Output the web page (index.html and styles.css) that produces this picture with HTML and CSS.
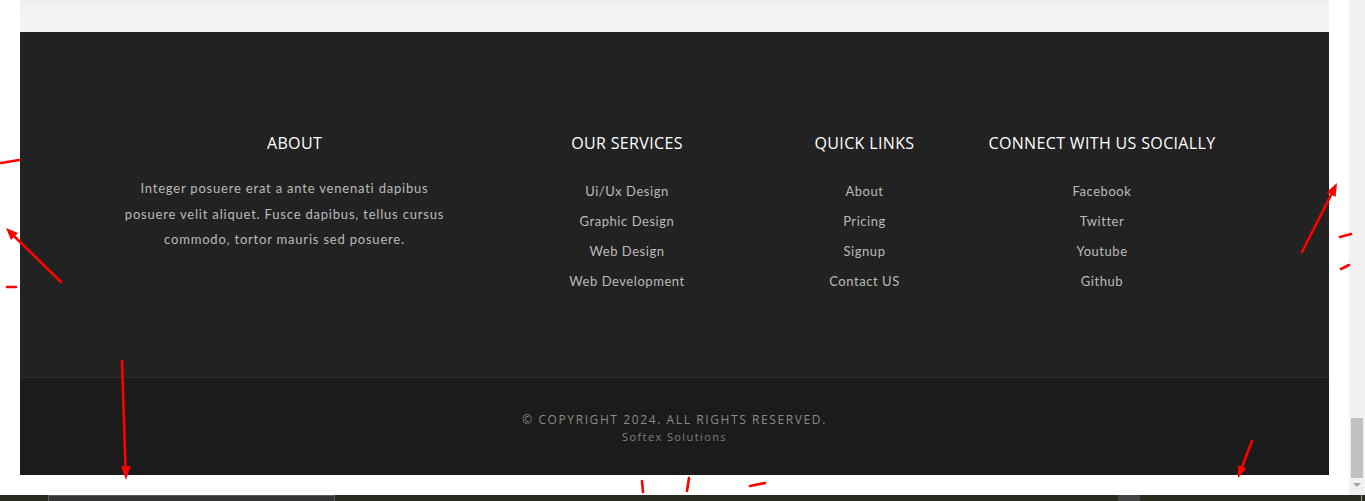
FILE: index.html
```html
<!DOCTYPE html>
<html lang="en">
<head>
<meta charset="utf-8">
<title>Footer</title>
<link rel="stylesheet" href="styles.css">
</head>
<body>
<div class="screen">
  <div class="viewport">
    <div class="site">
      <div class="topband"></div>
      <footer class="footer">
        <div class="footer-main">
          <div class="container">
            <div class="col col-4">
              <h4 class="col-title">ABOUT</h4>
              <p class="about-text">Integer posuere erat a ante venenati dapibus posuere velit aliquet. Fusce dapibus, tellus cursus commodo, tortor mauris sed posuere.</p>
            </div>
            <div class="col col-3">
              <h4 class="col-title">OUR SERVICES</h4>
              <ul class="links">
                <li><a href="#">Ui/Ux Design</a></li>
                <li><a href="#">Graphic Design</a></li>
                <li><a href="#">Web Design</a></li>
                <li><a href="#">Web Development</a></li>
              </ul>
            </div>
            <div class="col col-2">
              <h4 class="col-title">QUICK LINKS</h4>
              <ul class="links">
                <li><a href="#">About</a></li>
                <li><a href="#">Pricing</a></li>
                <li><a href="#">Signup</a></li>
                <li><a href="#">Contact US</a></li>
              </ul>
            </div>
            <div class="col col-3">
              <h4 class="col-title">CONNECT WITH US SOCIALLY</h4>
              <ul class="links">
                <li><a href="#">Facebook</a></li>
                <li><a href="#">Twitter</a></li>
                <li><a href="#">Youtube</a></li>
                <li><a href="#">Github</a></li>
              </ul>
            </div>
          </div>
        </div>
        <div class="footer-bottom">
          <p class="copyright">© Copyright 2024. All Rights Reserved.</p>
          <p class="company">Softex Solutions</p>
        </div>
      </footer>
    </div>
    <div class="scrollbar">
      <div class="scroll-thumb"></div>
      <div class="scroll-arrow"></div>
    </div>
  </div>
  <div class="taskbar">
    <div class="task task-left"></div>
    <div class="task task-right"></div>
    <div class="task-line"></div>
  </div>

  <svg class="marks" width="1365" height="501" viewBox="0 0 1365 501" xmlns="http://www.w3.org/2000/svg">
    <g stroke="#ff0000" stroke-width="2.6" stroke-linecap="round" fill="none">
      <line x1="1" y1="163" x2="19" y2="160"/>
      <line x1="61" y1="282" x2="13" y2="235"/>
      <line x1="7" y1="287" x2="16" y2="287"/>
      <line x1="122" y1="361" x2="125.6" y2="470"/>
      <line x1="1302" y1="252" x2="1332" y2="193"/>
      <line x1="1340" y1="237" x2="1351" y2="234"/>
      <line x1="1341" y1="269" x2="1349" y2="265"/>
      <line x1="642" y1="481" x2="643" y2="492"/>
      <line x1="689" y1="478" x2="687" y2="491"/>
      <line x1="750" y1="486" x2="765" y2="483"/>
      <line x1="1252" y1="441" x2="1242" y2="467"/>
    </g>
    <g fill="#ff0000">
      <polygon points="6,228 18,233 11,240"/>
      <polygon points="126,480 130.5,466 121,466.3"/>
      <polygon points="1337,183 1335.6,197 1326.6,192.3"/>
      <polygon points="1238,478 1246.4,468.4 1238,465.2"/>
    </g>
  </svg>
</div>
</body>
</html>
```

FILE: styles.css
```css
* {
  box-sizing: border-box;
}

html, body {
  margin: 0;
  padding: 0;
  width: 1365px;
  height: 501px;
  overflow: hidden;
  background: #ffffff;
}

.screen {
  position: relative;
  width: 1365px;
  height: 501px;
  display: flex;
  flex-direction: column;
}

.viewport {
  display: flex;
  height: 495px;
}

.site {
  flex: 1;
  padding: 0 20px;
  display: flex;
  flex-direction: column;
}

.topband {
  height: 32px;
  background: linear-gradient(#ececec, #f4f4f4 9px, #f4f4f4);
}

.footer {
  display: flex;
  flex-direction: column;
}

.footer-main {
  background: #222222;
  height: 346px;
  padding-top: 99px;
  border-bottom: 1px solid #2c2c2c;
}

.container {
  width: 1140px;
  margin: 0 auto;
  display: flex;
}

.col {
  padding: 0 15px;
  text-align: center;
}

.col-4 { width: 380px; }
.col-3 { width: 285px; }
.col-2 { width: 190px; }

.col-title {
  margin: 0 0 21px;
  font-family: "Open Sans", "Noto Sans", sans-serif;
  font-weight: 400;
  font-size: 16px;
  line-height: 24px;
  color: #ffffff;
  letter-spacing: 0.35px;
}

.about-text {
  margin: 2px 0 0;
  padding: 0 20px 0 0;
  font-family: Lato, "Open Sans", sans-serif;
  font-size: 13px;
  line-height: 25.5px;
  letter-spacing: 0.8px;
  color: #bababa;
}

.links {
  list-style: none;
  margin: 0;
  padding: 0;
}

.links li {
  line-height: 30px;
}

.links a {
  font-family: Lato, "Open Sans", sans-serif;
  font-size: 13px;
  letter-spacing: 0.55px;
  color: #bababa;
  text-decoration: none;
}

.footer-bottom {
  background: #1b1b1b;
  height: 97px;
  padding-top: 33px;
  text-align: center;
}

.copyright {
  margin: 0;
  font-family: "Open Sans", sans-serif;
  font-size: 12px;
  line-height: 17px;
  letter-spacing: 1.6px;
  text-transform: uppercase;
  color: #8a8a8a;
}

.company {
  margin: 0;
  font-family: "Open Sans", sans-serif;
  font-size: 11px;
  line-height: 17px;
  letter-spacing: 1.4px;
  color: #7f7f7f;
}

.scrollbar {
  position: relative;
  width: 16px;
  background: #f1f1f1;
}

.scroll-thumb {
  position: absolute;
  left: 2px;
  top: 418px;
  width: 12px;
  height: 60px;
  background: #c1c1c1;
}

.scroll-arrow {
  position: absolute;
  left: 4px;
  top: 483px;
  width: 0;
  height: 0;
  border-left: 4px solid transparent;
  border-right: 4px solid transparent;
  border-top: 4px solid #a3a3a3;
}

.taskbar {
  position: relative;
  height: 6px;
  background: #2a2a1f;
}

.task {
  position: absolute;
  top: 0;
  height: 6px;
}

.task-left {
  left: 48px;
  width: 287px;
  background: #353535;
  border: 1px solid #5a5a5a;
  border-bottom: none;
}

.task-right {
  left: 1118px;
  width: 22px;
  background: #454545;
}

.task-line {
  position: absolute;
  left: 1361px;
  top: 0;
  width: 1px;
  height: 6px;
  background: #9a9a9a;
}

.marks {
  position: absolute;
  left: 0;
  top: 0;
  pointer-events: none;
}
```
